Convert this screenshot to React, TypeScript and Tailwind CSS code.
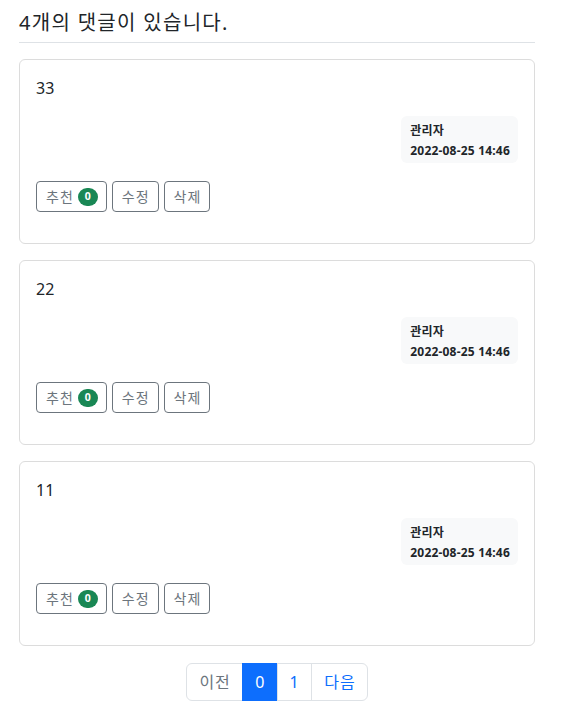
import React from "react";

const font = { fontFamily: '"Noto Sans", "Noto Sans CJK KR", sans-serif' };

function Comment({ text }: { text: string }) {
  return (
    <div className="mt-4 rounded-[6px] border border-[#dcdcdc] bg-white">
      <div className="px-4 pt-4 pb-[31px]">
        <div className="text-[16px] leading-[24px] text-[#212529]">{text}</div>
        <div className="mt-4 flex justify-end">
          <div className="rounded-[6px] bg-[#f8f9fa] pl-[9px] pr-[8px] pt-[5px] pb-[2px] text-[12px] font-bold leading-[20px] tracking-[0.2px] text-[#212529]">
            <div>관리자</div>
            <div>2022-08-25 14:46</div>
          </div>
        </div>
        <div className="mt-[18px] flex gap-[5px]">
          <button className="flex h-[31px] items-center rounded-[4px] border border-[#6c757d] pl-[9px] pr-[8px] text-[14px] leading-[21px] tracking-[1px] text-[#6c757d]">
            추천
            <span className="ml-[4px] inline-flex h-[18px] min-w-[20px] items-center justify-center rounded-full bg-[#198754] px-[6px] text-[10.5px] font-bold leading-none tracking-normal text-white">
              0
            </span>
          </button>
          <button className="h-[31px] rounded-[4px] border border-[#6c757d] pl-[9px] pr-[8px] text-[14px] leading-[21px] tracking-[1px] text-[#6c757d]">
            수정
          </button>
          <button className="h-[31px] rounded-[4px] border border-[#6c757d] pl-[9px] pr-[8px] text-[14px] leading-[21px] tracking-[1px] text-[#6c757d]">
            삭제
          </button>
        </div>
      </div>
    </div>
  );
}

export default function App() {
  return (
    <div style={font} className="min-h-[708px] bg-white">
      <div className="ml-[19px] w-[516px] pb-4">
        <div className="border-b border-[#dee2e6] pt-[11px] pb-[7px] text-[20px] leading-[24px] tracking-[1.3px] text-[#212529]">
          4개의 댓글이 있습니다.
        </div>
        <Comment text="33" />
        <Comment text="22" />
        <Comment text="11" />
        <div className="mt-[17px] flex justify-center">
          <div className="flex text-[16px] leading-[24px]">
            <span className="rounded-l-[6px] border border-[#dee2e6] py-[6px] pl-[12.5px] pr-[11.5px] tracking-[1px] text-[#6c757d]">이전</span>
            <span className="-ml-px border border-[#0d6efd] bg-[#0d6efd] px-3 py-[6px] text-white">0</span>
            <span className="-ml-px border border-[#dee2e6] px-3 py-[6px] text-[#0d6efd]">1</span>
            <span className="-ml-px rounded-r-[6px] border border-[#dee2e6] py-[6px] pl-[12.5px] pr-[11.5px] tracking-[1px] text-[#0d6efd]">다음</span>
          </div>
        </div>
      </div>
    </div>
  );
}
